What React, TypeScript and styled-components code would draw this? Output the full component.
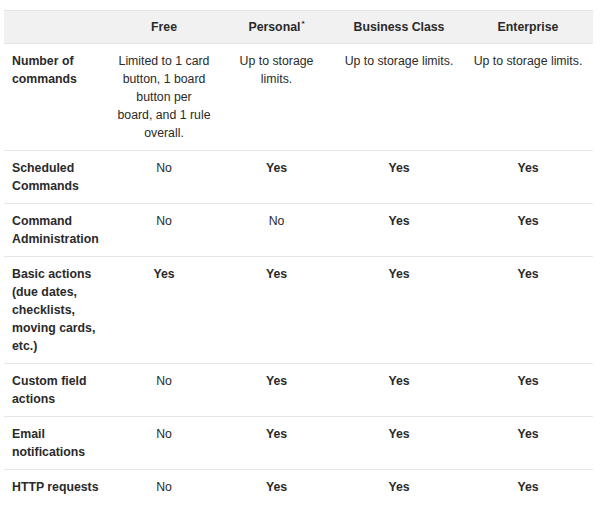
import React from "react";
import styled, { createGlobalStyle } from "styled-components";

const GlobalStyle = createGlobalStyle`
  html, body {
    margin: 0;
    padding: 0;
    background: #ffffff;
  }
  body {
    font-family: "Liberation Sans", Arial, Helvetica, sans-serif;
    color: #2a2a2a;
  }
`;

const Page = styled.div`
  padding: 10px 9px 0 4px;
`;

const Table = styled.table`
  width: 589px;
  border-collapse: collapse;
  table-layout: fixed;
  font-size: 12.3px;
  line-height: 18px;
`;

const Head = styled.thead`
  background: #f1f1f1;
`;

const HeadRow = styled.tr`
  border-top: 1px solid #e4e4e4;
  border-bottom: 1px solid #e4e4e4;
`;

const HeadCell = styled.th`
  padding: 7px 4px;
  font-weight: 700;
  text-align: center;
  color: #2a2a2a;
`;

const Star = styled.sup`
  font-size: 8px;
  line-height: 0;
  vertical-align: 5px;
  margin-left: 1px;
`;

const Row = styled.tr`
  border-bottom: 1px solid #e6e6e6;
  &:last-child {
    border-bottom: none;
  }
`;

const LabelCell = styled.td`
  padding: 8px 4px 8px 8px;
  font-weight: 700;
  text-align: left;
  vertical-align: top;
`;

const ValueCell = styled.td<{ $bold?: boolean }>`
  padding: 8px 4px;
  font-weight: ${(p) => (p.$bold ? 700 : 400)};
  text-align: center;
  vertical-align: top;
`;

type Cell = { text: React.ReactNode; bold?: boolean };
type Feature = { label: string; cells: Cell[] };

const yes: Cell = { text: "Yes", bold: true };
const no: Cell = { text: "No" };
const storage: Cell = { text: "Up to storage limits." };

const features: Feature[] = [
  {
    label: "Number of commands",
    cells: [
      {
        text: (
          <>
            Limited to 1 card
            <br />
            button, 1 board
            <br />
            button per
            <br />
            board, and 1 rule
            <br />
            overall.
          </>
        ),
      },
      {
        text: (
          <>
            Up to storage
            <br />
            limits.
          </>
        ),
      },
      storage,
      storage,
    ],
  },
  { label: "Scheduled Commands", cells: [no, yes, yes, yes] },
  { label: "Command Administration", cells: [no, no, yes, yes] },
  {
    label: "Basic actions (due dates, checklists, moving cards, etc.)",
    cells: [yes, yes, yes, yes],
  },
  { label: "Custom field actions", cells: [no, yes, yes, yes] },
  { label: "Email notifications", cells: [no, yes, yes, yes] },
  { label: "HTTP requests", cells: [no, yes, yes, yes] },
];

const widths = [106, 108, 117, 128, 130];

export default function App() {
  return (
    <>
      <GlobalStyle />
      <Page>
        <Table>
          <colgroup>
            {widths.map((w, i) => (
              <col key={i} style={{ width: w }} />
            ))}
          </colgroup>
          <Head>
            <HeadRow>
              <HeadCell />
              <HeadCell>Free</HeadCell>
              <HeadCell>
                Personal<Star>*</Star>
              </HeadCell>
              <HeadCell>Business Class</HeadCell>
              <HeadCell>Enterprise</HeadCell>
            </HeadRow>
          </Head>
          <tbody>
            {features.map((f) => (
              <Row key={f.label}>
                <LabelCell>{f.label}</LabelCell>
                {f.cells.map((c, i) => (
                  <ValueCell key={i} $bold={c.bold}>
                    {c.text}
                  </ValueCell>
                ))}
              </Row>
            ))}
          </tbody>
        </Table>
      </Page>
    </>
  );
}
